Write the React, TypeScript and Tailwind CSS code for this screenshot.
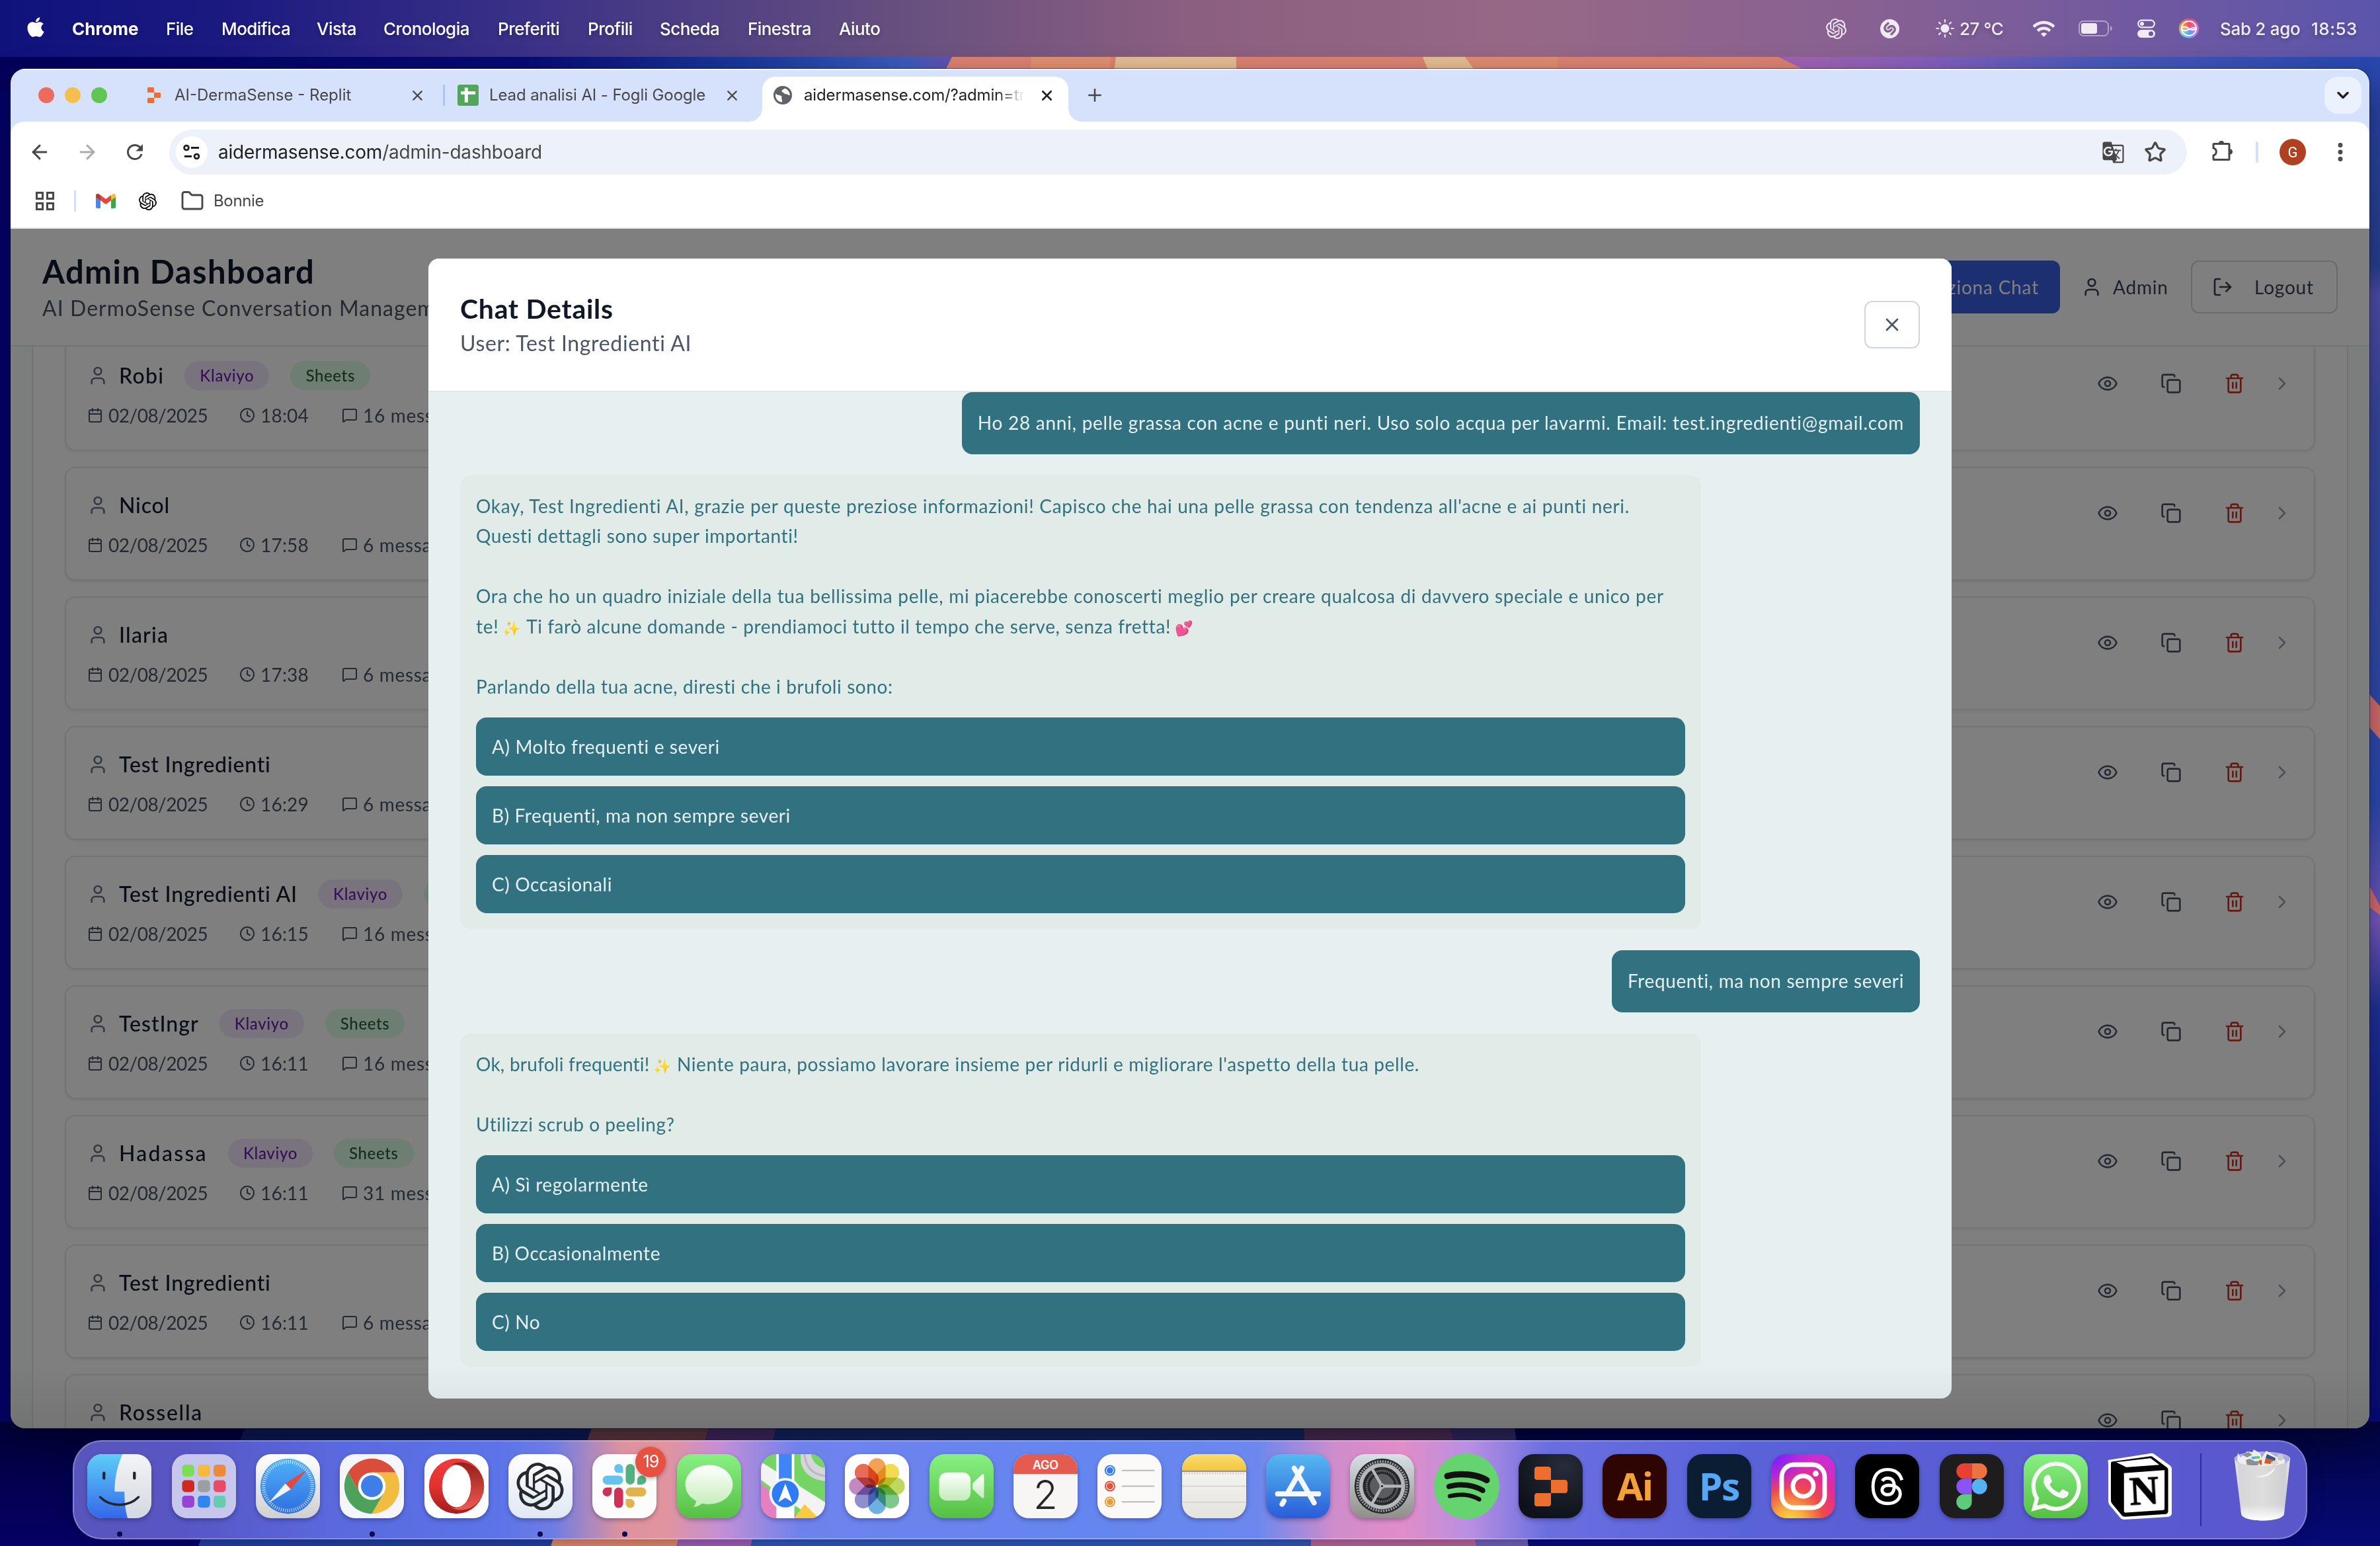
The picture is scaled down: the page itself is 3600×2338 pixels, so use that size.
import type { ReactNode } from "react";
import {
  ArrowLeft,
  ArrowRight,
  Calendar,
  ChevronDown,
  ChevronRight,
  Clock,
  Copy,
  EllipsisVertical,
  Eye,
  Folder,
  LogOut,
  MessageSquare,
  Plus,
  Star,
  Trash2,
  User,
  X,
} from "lucide-react";
import { FaApple, FaSpotify, FaWhatsapp } from "react-icons/fa";
import { FaThreads } from "react-icons/fa6";
import { MdGTranslate, MdRefresh, MdWifi } from "react-icons/md";
import { SiOpenai, SiShazam } from "react-icons/si";

/* ---------- desktop ---------- */

function Wallpaper() {
  return (
    <svg className="absolute inset-0 h-full w-full" viewBox="0 0 3600 2338" preserveAspectRatio="none">
      <defs>
        <linearGradient id="wTop" x1="0" x2="1" y1="0" y2="0">
          <stop offset="0" stopColor="#04005c" />
          <stop offset="0.22" stopColor="#070b74" />
          <stop offset="0.32" stopColor="#1c3c9e" />
          <stop offset="0.38" stopColor="#3c5cbc" />
          <stop offset="0.41" stopColor="#7450a8" />
          <stop offset="0.76" stopColor="#a064b4" />
          <stop offset="0.81" stopColor="#8560bd" />
          <stop offset="0.88" stopColor="#4a5abb" />
          <stop offset="1" stopColor="#2848b0" />
        </linearGradient>
        <linearGradient id="wSide" x1="0" x2="0" y1="0" y2="1">
          <stop offset="0" stopColor="#2848b0" />
          <stop offset="0.14" stopColor="#28418f" />
          <stop offset="0.16" stopColor="#5050a8" />
          <stop offset="0.24" stopColor="#3a4aa0" />
          <stop offset="0.5" stopColor="#2b4cb4" />
          <stop offset="0.58" stopColor="#7a5ac0" />
          <stop offset="0.64" stopColor="#20329a" />
          <stop offset="0.8" stopColor="#0a1080" />
          <stop offset="1" stopColor="#080c78" />
        </linearGradient>
        <linearGradient id="wShade" x1="0" x2="0" y1="0" y2="1">
          <stop offset="0" stopColor="#000018" stopOpacity="0.6" />
          <stop offset="1" stopColor="#000018" stopOpacity="0.05" />
        </linearGradient>
      </defs>
      <rect width="3600" height="2338" fill="#05006a" />
      <rect width="3600" height="140" fill="url(#wTop)" />
      <path d="M1440 86h1250l60 30H1425z" fill="#dd8272" />
      <path d="M1560 86h120l-2 30h-120z" fill="#e29070" />
      <path d="M1688 86h182v30h-186z" fill="#e4bd92" />
      <path d="M2152 86h64l22 30h-74z" fill="#e4bd92" />
      <path d="M2216 86h140v30h-118z" fill="#e08c72" />
      <rect x="3570" y="86" width="30" height="2252" fill="url(#wSide)" />
      <path d="M3584 1050l16 18v50l-16-18zM3584 1340l16 30v14l-16-12z" fill="#d9706f" />
      <path d="M382 2130H905l-72 208H300z" fill="#2140a0" />
      <path d="M905 2130h175l-56 208H833z" fill="#e0876a" />
      <path d="M1080 2130h100l-44 208H1024z" fill="#9c5eb4" />
      <path d="M1180 2130h790l13 208H1136z" fill="#2f55b4" />
      <path d="M1970 2130h218l46 208H1983z" fill="#b5669c" />
      <path d="M2188 2130h100l24 208h-78z" fill="#7060b8" />
      <path d="M2288 2130h1312v208H2312z" fill="#060a7c" />
      <rect y="2150" width="3600" height="188" fill="url(#wShade)" />
    </svg>
  );
}

const MENUS = [
  { label: "File", width: "w-[84px]" },
  { label: "Modifica", width: "w-[144px]" },
  { label: "Vista", width: "w-[101px]" },
  { label: "Cronologia", width: "w-[173px]" },
  { label: "Preferiti", width: "w-[136px]" },
  { label: "Profili", width: "w-[109px]" },
  { label: "Scheda", width: "w-[133px]" },
  { label: "Finestra", width: "w-[138px]" },
  { label: "Aiuto", width: "w-[80px]" },
];

function SunIcon() {
  return (
    <svg className="h-7 w-7" viewBox="0 0 28 28" fill="currentColor" stroke="currentColor" strokeWidth="2.2" strokeLinecap="round">
      <circle cx="14" cy="14" r="6.5" stroke="none" />
      <path d="M14 1.2v3M14 23.800v3M1.200 14h3M23.800 14h3M5 5l2 2M21 21l2 2M5 23l2-2M21 7l2-2" />
    </svg>
  );
}

function BatteryIcon() {
  return (
    <svg className="h-6 w-[52px]" viewBox="0 0 52 24" fill="none">
      <rect x="1" y="1" width="44" height="22" rx="6.500" stroke="currentColor" strokeOpacity="0.5" strokeWidth="2" />
      <rect x="4" y="4" width="24" height="16" rx="3.500" fill="currentColor" />
      <path d="M48 8.500v7c2-.6 3-2 3-3.500s-1-2.900-3-3.500z" fill="currentColor" fillOpacity="0.5" />
    </svg>
  );
}

function ControlCenterIcon() {
  return (
    <svg className="h-7 w-[27px]" viewBox="0 0 27 28" fill="none">
      <rect x="1.200" y="1.700" width="24.600" height="10.600" rx="5.300" stroke="currentColor" strokeWidth="2.200" />
      <circle cx="7" cy="7" r="3" fill="currentColor" />
      <rect y="16" width="27" height="12" rx="6" fill="currentColor" />
      <circle cx="20.500" cy="22" r="3.500" fill="#6c58a0" />
    </svg>
  );
}

function SiriIcon() {
  return (
    <span className="flex h-[30px] w-[30px] items-center justify-center rounded-full bg-[conic-gradient(#ef4a6a,#e06ad0_25%,#a77cf0_35%,#4fb0f5_52%,#8fd0d0_65%,#f0a040_80%,#ef4a6a)]">
      <svg className="h-[26px] w-[26px]" viewBox="0 0 26 26" fill="none" stroke="#fff" strokeWidth="1.800">
        <circle cx="13" cy="13" r="11" />
        <path d="M2 12c6-3 9 0 12 2s6 2 10-1M2 14c8 7 11-4 22-2" />
      </svg>
    </span>
  );
}

function MenuBar() {
  return (
    <header className="relative flex h-[86px] items-center bg-[linear-gradient(90deg,#10127c_0%,#1a1980_9%,#3a3187_22%,#67507f_38%,#8b5f80_50%,#976886_64%,#886192_78%,#7059a0_90%,#5a55ac_100%)] font-['Inter'] text-[26px] font-medium text-white text-shadow-[0_3px_6px_rgba(0,0,0,0.25)]">
      <div className="flex w-[109px] items-center pl-[38px]">
        <FaApple className="h-[34px] w-[32px] -translate-y-[2px]" />
      </div>
      <span className="w-[142px] font-bold">Chrome</span>
      <nav className="flex tracking-[-0.55px]">
        {MENUS.map((m) => (
          <span key={m.label} className={m.width}>
            {m.label}
          </span>
        ))}
      </nav>
      <div className="ml-auto flex items-center pr-[34px] text-[#f0eaf3]">
        <SiOpenai className="h-[31px] w-[31px]" />
        <SiShazam className="ml-[51px] h-[29px] w-[29px]" />
        <span className="ml-[55px] flex items-center gap-2">
          <SunIcon />
          <span className="w-[68px] whitespace-nowrap tracking-[-0.4px]">27 °C</span>
        </span>
        <MdWifi className="ml-[41px] h-[37px] w-[37px]" />
        <span className="ml-[34px]">
          <BatteryIcon />
        </span>
        <span className="ml-[37px]">
          <ControlCenterIcon />
        </span>
        <span className="ml-[36px]">
          <SiriIcon />
        </span>
        <span className="ml-[32px] w-[138px] tracking-[-0.3px]">Sab 2 ago</span>
        <span className="w-[70px] tracking-[0.5px]">18:53</span>
      </div>
    </header>
  );
}

/* ---------- browser chrome ---------- */

function ReplitMark({ className }: { className: string }) {
  return (
    <svg className={className} viewBox="0 0 20 24" fill="#ee6f2d">
      <path d="M1.500 0h7c.8 0 1.500.7 1.500 1.500V8H1.500C.7 8 0 7.300 0 6.500v-5C0 .7.700 0 1.500 0z" />
      <path d="M10 8h8.500c.8 0 1.500.7 1.500 1.500v5c0 .8-.7 1.500-1.500 1.500H10z" />
      <path d="M1.500 16H10v6.500c0 .8-.7 1.500-1.500 1.500h-7C.7 24 0 23.300 0 22.500v-5c0-.8.700-1.500 1.500-1.500z" />
    </svg>
  );
}

function SheetsMark() {
  return (
    <svg className="h-8 w-8" viewBox="0 0 32 32">
      <rect width="32" height="32" rx="3.500" fill="#54a55c" />
      <path d="M10.800 4.500h5v5.800H27v4.400H15.800V27h-5V14.700H5v-4.400h5.800z" fill="#fff" />
    </svg>
  );
}

function GlobeMark() {
  return (
    <svg className="h-7 w-7" viewBox="0 0 28 28">
      <circle cx="14" cy="14" r="14" fill="#5f6368" />
      <path d="M3.500 11.500c2 3 5.500 2 8 3.500 2 1.300 0 3.500 1 5 .8 1.200 1 3 .3 4.600C7 24 3 19.500 3 14zM17 3.500c-1 2-4 1.500-4.500 4-.3 2 2.500 2 3.500 3.500 1.500 2.200 4 .2 5.500 2 1 1.200 2 1 3.300.8C24.500 9 21.500 5 17 3.500z" fill="#fff" />
    </svg>
  );
}

function TabStrip() {
  return (
    <div className="flex h-20 items-center bg-[#d6e1fb] font-['Inter'] text-2xl text-[#474747] shadow-[inset_0_2px_0_#f3f6fe]">
      <div className="flex w-[207px] gap-4 pl-[42px]">
        <i className="h-6 w-6 rounded-full bg-[#ec6a5e]" />
        <i className="h-6 w-6 rounded-full bg-[#f4bf4f]" />
        <i className="h-6 w-6 rounded-full bg-[#61c554]" />
      </div>
      <div className="flex w-[447px] items-center">
        <ReplitMark className="h-6 w-5" />
        <span className="ml-[21px] flex-1">AI-DermaSense - Replit</span>
        <X className="mr-[26px] h-[25px] w-[25px]" strokeWidth={2.300} />
      </div>
      <div className="flex w-[467px] items-center border-l-[3px] border-[#a9c5f8]">
        <span className="ml-[19px]">
          <SheetsMark />
        </span>
        <span className="ml-4 flex-1 whitespace-nowrap tracking-[-0.1px]">Lead analisi AI - Fogli Google</span>
        <X className="mr-[17px] h-[25px] w-[25px]" strokeWidth={2.300} />
      </div>
      <div className="relative mt-3 ml-[16px] flex h-[68px] w-[463px] items-center rounded-t-[20px] bg-white pb-3 text-[#1f1f1f]">
        <i className="absolute bottom-0 -left-5 h-5 w-5 bg-[radial-gradient(circle_at_0_0,transparent_19.5px,#fff_20px)]" />
        <i className="absolute -right-5 bottom-0 h-5 w-5 bg-[radial-gradient(circle_at_100%_0,transparent_19.5px,#fff_20px)]" />
        <span className="ml-[17px]">
          <GlobeMark />
        </span>
        <span className="ml-[18px] w-[334px] overflow-hidden bg-[linear-gradient(90deg,#1f1f1f_87%,transparent_100%)] bg-clip-text tracking-[-0.15px] whitespace-nowrap text-transparent">
          aidermasense.com/?admin=tr
        </span>
        <X className="ml-[21px] h-[25px] w-[25px]" strokeWidth={2.500} />
      </div>
      <Plus className="ml-[25px] h-[30px] w-[30px]" strokeWidth={2} />
      <div className="mr-3 ml-auto flex h-14 w-14 items-center justify-center rounded-[20px] bg-[#ebf2fd] text-[#1f1f1f]">
        <ChevronDown className="h-7 w-7" strokeWidth={3} />
      </div>
    </div>
  );
}

function SiteControlsIcon() {
  return (
    <svg className="h-6 w-7" viewBox="0 0 28 24" fill="none" stroke="#1f1f1f" strokeWidth="2.800">
      <circle cx="6" cy="5.500" r="3.400" />
      <path d="M13 5.500h12M3 18.500h11" />
      <circle cx="21.500" cy="18.500" r="3.400" />
    </svg>
  );
}

function ExtensionsIcon() {
  return (
    <svg className="h-8 w-8" viewBox="0 0 32 32">
      <path d="M3 5.500h22a1 1 0 011 1v22a1 1 0 01-1 1H3a1 1 0 01-1-1v-5.500c2.600-.6 4.300-2.600 4.300-5.500S4.600 12.600 2 12V6.500a1 1 0 011-1z" fill="none" stroke="#474747" strokeWidth="3" strokeLinejoin="round" />
      <path d="M10 5a4 4 0 018 0zM27 13.500a4 4 0 010 8z" fill="#474747" />
    </svg>
  );
}

function Toolbar() {
  return (
    <div className="bg-[#d6e1fb]">
      <div className="flex h-[92px] items-center rounded-t-[20px] bg-white font-['Inter'] text-[28px] text-[#474747]">
        <ArrowLeft className="ml-[27px] h-[34px] w-[34px]" strokeWidth={2.100} />
        <ArrowRight className="ml-[38px] h-[34px] w-[34px] text-[#aaabac]" strokeWidth={2.100} />
        <MdRefresh className="ml-[37px] h-[36px] w-[36px]" />
        <div className="ml-[34px] flex h-[68px] w-[3052px] items-center rounded-full bg-[#edf2fa] pl-[10px]">
          <span className="flex h-12 w-12 items-center justify-center rounded-full bg-white">
            <SiteControlsIcon />
          </span>
          <span className="ml-4 tracking-[-0.2px]">
            <span className="text-[#1f1f1f]">aidermasense.com</span>/admin-dashboard
          </span>
          <MdGTranslate className="ml-auto h-[35px] w-[35px]" />
          <Star className="mr-[31px] ml-[29px] h-[34px] w-[34px]" strokeWidth={2.300} />
        </div>
        <span className="ml-[38px] -mt-1">
          <ExtensionsIcon />
        </span>
        <i className="ml-[34px] h-8 w-1 rounded bg-[#d3e0fb]" />
        <span className="ml-[32px] flex h-10 w-10 items-center justify-center rounded-full bg-[#b0401f] font-['Roboto'] text-[22px] text-white">
          G
        </span>
        <EllipsisVertical className="ml-[34px] h-9 w-9" strokeWidth={2.600} />
      </div>
    </div>
  );
}

function BookmarksBar() {
  return (
    <div className="flex h-[70px] items-center border-b-2 border-[#e2e2e2] bg-white pb-[12px] font-['Inter'] text-2xl text-[#474747]">
      <svg className="ml-[38px] h-7 w-7" viewBox="0 0 28 28" fill="none" stroke="#474747" strokeWidth="3">
        <path d="M1.500 1.500h9v9h-9zM17.500 1.500h9v9h-9zM1.500 17.500h9v9h-9zM17.500 17.500h9v9h-9z" />
      </svg>
      <i className="ml-[30px] h-8 w-[3px] bg-[#d3e0fb]" />
      <svg className="ml-[30px] h-[22px] w-[30px]" viewBox="0 0 30 22">
        <path d="M0 3v17a2 2 0 002 2h5V9z" fill="#4a86ef" />
        <path d="M30 3v17a2 2 0 01-2 2h-5V9z" fill="#43a24f" />
        <path d="M23 3.300V10l7-5V3c0-3-3-3.800-5-2.300z" fill="#f6bd3b" />
        <path d="M7 10V2l8 6 8-6v8l-8 6z" fill="#e2483b" />
        <path d="M0 3v2l7 5V2.300L5 .7C3-.8 0 0 0 3z" fill="#c03526" />
      </svg>
      <SiOpenai className="ml-[35px] h-[27px] w-[27px] text-black" />
      <Folder className="ml-[36px] h-[36px] w-[36px]" strokeWidth={1.900} />
      <span className="ml-[14px] tracking-[-0.35px]">Bonnie</span>
    </div>
  );
}

/* ---------- admin page ---------- */

type Row = { name: string; spacing?: string; time?: string; count?: number; synced?: boolean };

const ROWS: Row[] = [
  { name: "Robi", spacing: "tracking-[1.3px]", time: "18:04", count: 16, synced: true },
  { name: "Nicol", time: "17:58", count: 6 },
  { name: "Ilaria", spacing: "tracking-[1.2px]", time: "17:38", count: 6 },
  { name: "Test Ingredienti", time: "16:29", count: 6 },
  { name: "Test Ingredienti AI", time: "16:15", count: 16, synced: true },
  { name: "TestIngr", spacing: "tracking-[1px]", time: "16:11", count: 16, synced: true },
  { name: "Hadassa", spacing: "tracking-[2.3px]", time: "16:11", count: 31, synced: true },
  { name: "Test Ingredienti", time: "16:11", count: 6 },
  { name: "Rossella", spacing: "tracking-[1.7px]" },
];

function IconButton({ children }: { children: ReactNode }) {
  return <button className="flex h-[72px] w-20 items-center justify-center">{children}</button>;
}

function ConversationCard({ row }: { row: Row }) {
  return (
    <article className="flex h-[172px] shrink-0 items-start justify-between rounded-2xl border-2 border-gray-200 bg-white p-8 shadow-[0_2px_4px_rgba(0,0,0,0.08)]">
      <div>
        <div className="flex h-12 items-center">
          <User className="h-8 w-8 text-gray-500" />
          <span className={`ml-4 text-[32px] font-medium text-gray-900 ${row.spacing ?? "tracking-[0.8px]"}`}>{row.name}</span>
          {row.synced && (
            <>
              <span className="ml-[31px] flex h-11 items-center rounded-full bg-[#f0e6fb] px-[23px] text-2xl font-medium tracking-[0.65px] text-[#6b21a8]">
                Klaviyo
              </span>
              <span className="ml-8 flex h-11 items-center rounded-full bg-[#dcfce7] px-[23px] text-2xl font-medium tracking-[0.65px] text-[#265d35]">
                Sheets
              </span>
            </>
          )}
        </div>
        {row.time && (
          <div className="mt-4 flex h-10 items-center text-[28px] text-gray-600">
            <span className="flex w-[230px] items-center gap-2 tracking-[-0.5px]">
              <Calendar className="h-6 w-6" />
              02/08/2025
            </span>
            <span className="flex w-[155px] items-center gap-2 tracking-[0.2px]">
              <Clock className="h-6 w-6" />
              {row.time}
            </span>
            <span className="flex items-center gap-2 tracking-[0.69px]">
              <MessageSquare className="h-6 w-6" />
              {row.count} messaggi
            </span>
          </div>
        )}
      </div>
      <div className="flex items-center gap-4 text-gray-600">
        <IconButton>
          <Eye className="h-8 w-8" />
        </IconButton>
        <IconButton>
          <Copy className="h-8 w-8" />
        </IconButton>
        <IconButton>
          <Trash2 className="h-8 w-8 text-[#cc3322]" />
        </IconButton>
        <ChevronRight className="h-8 w-8 text-gray-400" />
      </div>
    </article>
  );
}

function AdminPage() {
  return (
    <div className="flex h-full flex-col bg-[#f6fcf9]">
      <div className="flex h-[178px] shrink-0 items-center justify-between border-b-2 border-gray-200 bg-white px-12">
        <div>
          <h1 className="text-[49px] leading-[64px] font-bold tracking-[1.4px] text-gray-900">Admin Dashboard</h1>
          <p className="text-[32px] leading-[48px] tracking-[1.05px] text-gray-600">AI DermoSense Conversation Management</p>
        </div>
        <div className="flex items-center gap-8 text-[28px] tracking-[0.8px] text-gray-700">
          <button className="h-20 rounded-xl bg-[#385ee2] px-8 text-white">Seleziona Chat</button>
          <span className="flex items-center gap-4">
            <User className="h-8 w-8" />
            <span className="w-[86px]">Admin</span>
          </span>
          <button className="flex h-20 w-[222px] items-center gap-8 rounded-xl border-2 border-gray-300 px-[30px]">
            <LogOut className="h-8 w-8" />
            Logout
          </button>
        </div>
      </div>
      <div className="min-h-0 flex-1 overflow-hidden px-8">
        <div className="-mt-3.5 flex flex-col gap-6 border-x-2 border-gray-200 bg-white px-12 pb-6">
          {ROWS.map((row, i) => (
            <ConversationCard key={i} row={row} />
          ))}
        </div>
      </div>
    </div>
  );
}

/* ---------- chat dialog ---------- */

function Emoji({ children }: { children: string }) {
  return <span className="-ml-[2px] inline-block w-[28px] text-[22px] leading-none tracking-normal">{children}</span>;
}

function UserBubble({ children }: { children: ReactNode }) {
  return (
    <p className="self-end rounded-2xl bg-[#327280] px-6 py-6 leading-[45.5px] text-[#e7f0f1]">{children}</p>
  );
}

function BotBubble({ children, options }: { children: ReactNode; options: string[] }) {
  return (
    <section className="w-[85%] rounded-2xl bg-[#e1ebe7] p-6 text-[#327280]">
      <div className="leading-[45.5px] whitespace-nowrap">{children}</div>
      <div className="mt-6 flex flex-col gap-4">
        {options.map((o) => (
          <div key={o} className="flex h-[88px] items-center rounded-2xl bg-[#327280] px-6 tracking-[0.6px] text-[#e7f0f1]">
            {o}
          </div>
        ))}
      </div>
    </section>
  );
}

function ChatDialog() {
  return (
    <div role="dialog" className="flex h-[1724px] w-[2304px] flex-col overflow-hidden rounded-2xl bg-[#e7f0f1]">
      <div className="flex h-[202px] shrink-0 items-center justify-between border-b-2 border-[#e3e7ea] bg-white px-12">
        <div>
          <h2 className="text-[41px] leading-[56px] font-bold tracking-[0.7px] text-gray-900">Chat Details</h2>
          <p className="text-[32px] leading-[48px] tracking-[0.65px] text-gray-600">User: Test Ingredienti AI</p>
        </div>
        <button className="flex h-[72px] w-[84px] items-center justify-center rounded-xl border-2 border-gray-300 text-gray-600">
          <X className="h-8 w-8" />
        </button>
      </div>
      <div className="flex flex-col gap-8 px-12 text-[28px] tracking-[0.7px]">
        <UserBubble>
          <span className="tracking-[0.73px]">
            Ho 28 anni, pelle grassa con acne e punti neri. Uso solo acqua per lavarmi. Email: test.ingredienti@gmail.com
          </span>
        </UserBubble>
        <BotBubble options={["A) Molto frequenti e severi", "B) Frequenti, ma non sempre severi", "C) Occasionali"]}>
          <p>
            Okay, Test Ingredienti AI, grazie per queste preziose informazioni! Capisco che hai una pelle grassa con tendenza all'acne e ai
            punti neri.
            <br />
            <span className="tracking-[0.6px]">Questi dettagli sono super importanti!</span>
          </p>
          <p className="mt-[45.5px]">
            Ora che ho un quadro iniziale della tua bellissima pelle, mi piacerebbe conoscerti meglio per creare qualcosa di davvero
            speciale e unico per
            <br />
            te! <Emoji>✨</Emoji> <span className="tracking-[0.6px]">Ti farò alcune domande - prendiamoci tutto il tempo che serve, senza fretta!</span>{" "}
            <Emoji>💕</Emoji>
          </p>
          <p className="mt-[45.5px] tracking-[0.6px]">Parlando della tua acne, diresti che i brufoli sono:</p>
        </BotBubble>
        <UserBubble>
          <span className="tracking-[0.62px]">Frequenti, ma non sempre severi</span>
        </UserBubble>
        <BotBubble options={["A) Sì regolarmente", "B) Occasionalmente", "C) No"]}>
          <p>
            <span className="tracking-[0.25px]">Ok, brufoli frequenti! </span>
            <Emoji>✨</Emoji>{" "}
            <span className="tracking-[0.62px]">Niente paura, possiamo lavorare insieme per ridurli e migliorare l'aspetto della tua pelle.</span>
          </p>
          <p className="mt-[45.5px] tracking-[0.5px]">Utilizzi scrub o peeling?</p>
        </BotBubble>
      </div>
    </div>
  );
}

function BrowserWindow() {
  return (
    <div className="absolute top-[104px] left-4 flex h-[2056px] w-[3568px] flex-col overflow-hidden rounded-[22px] shadow-[0_0_0_1px_rgba(0,0,30,0.5),0_20px_50px_rgba(0,0,20,0.45)]">
      <TabStrip />
      <Toolbar />
      <BookmarksBar />
      <main className="relative min-h-0 flex-1 font-['Lato']">
        <AdminPage />
        <div className="absolute inset-0 flex items-center justify-center bg-black/50">
          <ChatDialog />
        </div>
        <i className="absolute inset-x-0 bottom-0 h-24 bg-linear-to-t from-black/8 to-transparent" />
      </main>
    </div>
  );
}

/* ---------- dock ---------- */

const TILE = "flex h-[97px] w-[97px] items-center justify-center overflow-hidden rounded-[23px] shadow-[0_3px_6px_rgba(0,0,40,0.3)]";

function FinderIcon() {
  return (
    <svg viewBox="0 0 100 100" className="h-full w-full">
      <defs>
        <linearGradient id="fiL" x1="0" x2="0" y1="0" y2="1">
          <stop stopColor="#5fcdfa" />
          <stop offset="1" stopColor="#3268ea" />
        </linearGradient>
        <linearGradient id="fiR" x1="0" x2="0" y1="0" y2="1">
          <stop stopColor="#f4f4f5" />
          <stop offset="1" stopColor="#d3d8e2" />
        </linearGradient>
      </defs>
      <rect width="100" height="100" fill="url(#fiR)" />
      <path d="M0 0h55c-8 18-12 36-12.500 57 0 .9.500 1.500 1.500 1.500h14c0 15 1 28 5 41.500H0z" fill="url(#fiL)" />
      <path d="M26 29.500v8M73.500 29.500v8" stroke="#23262c" strokeWidth="4.500" strokeLinecap="round" />
      <path d="M20 67c16 16 44 16 60 0" fill="none" stroke="#23262c" strokeWidth="3.600" strokeLinecap="round" />
    </svg>
  );
}

function LaunchpadIcon() {
  const fills = ["#7be04f", "#f8b93c", "#ec8a38", "#d1291f", "#9a9fa2", "#ec4a62", "#9642d6", "#2f86f2", "#63cdb0"];
  return (
    <svg viewBox="0 0 100 100" className="h-full w-full">
      <rect width="100" height="100" fill="#c7c6ec" />
      {fills.map((f, i) => (
        <rect key={i} x={16 + (i % 3) * 24.500} y={16.500 + Math.floor(i / 3) * 24.200} width="19" height="18.500" rx="5" fill={f} />
      ))}
    </svg>
  );
}

function SafariIcon() {
  return (
    <svg viewBox="0 0 100 100" className="h-full w-full">
      <defs>
        <linearGradient id="saB" x1="0" x2="0" y1="0" y2="1">
          <stop stopColor="#ffffff" />
          <stop offset="1" stopColor="#cfcfcf" />
        </linearGradient>
        <linearGradient id="saC" x1="0" x2="0" y1="0" y2="1">
          <stop stopColor="#50b2f8" />
          <stop offset="1" stopColor="#2e6ee0" />
        </linearGradient>
      </defs>
      <rect width="100" height="100" fill="url(#saB)" />
      <circle cx="50" cy="50" r="43" fill="url(#saC)" />
      <circle cx="50" cy="50" r="38" fill="none" stroke="#fff" strokeOpacity="0.85" strokeWidth="5.500" strokeDasharray="1 2.316" />
      <path d="M80 24L54.500 55 46 46z" fill="#e2483b" />
      <path d="M20 76l26-30 8.500 9z" fill="#f2f3f5" />
    </svg>
  );
}

function ChromeIcon() {
  return (
    <svg viewBox="0 0 100 100" className="h-full w-full">
      <rect width="100" height="100" fill="#f5f6fb" />
      <path d="M50 7a43 43 0 0137.200 21.500H50L31.400 60.700 12.800 28.500A43 43 0 0150 7z" fill="#d94d3a" />
      <path d="M87.200 28.500A43 43 0 0150 93l18.600-32.300L50 28.500z" fill="#f2bd3e" />
      <path d="M12.800 28.500A43 43 0 0050 93l18.600-32.300H31.400z" fill="#4da158" />
      <circle cx="50" cy="50" r="21.500" fill="#fff" />
      <circle cx="50" cy="50" r="17" fill="#3f7de8" />
    </svg>
  );
}

function OperaIcon() {
  return (
    <svg viewBox="0 0 100 100" className="h-full w-full">
      <defs>
        <linearGradient id="opA" x1="0" x2="0" y1="0" y2="1">
          <stop stopColor="#ef3a3c" />
          <stop offset="0.500" stopColor="#e2332f" />
          <stop offset="1" stopColor="#a01e1c" />
        </linearGradient>
        <linearGradient id="opB" x1="0" x2="0" y1="0" y2="1">
          <stop stopColor="#93201a" />
          <stop offset="1" stopColor="#ef5a52" />
        </linearGradient>
      </defs>
      <rect width="100" height="100" fill="#fff" />
      <circle cx="50" cy="50" r="43" fill="url(#opA)" />
      <path d="M39 18c22-14 54 2 54 32S61 96 39 82c8 5 22 0 29-10 7-12 7-32 0-44-7-10-21-15-29-10z" fill="url(#opB)" />
      <ellipse cx="50" cy="50" rx="22.500" ry="33" fill="#fff" />
    </svg>
  );
}

function SlackIcon() {
  return (
    <svg viewBox="0 0 100 100" className="h-full w-full">
      <rect width="100" height="100" fill="#fcfcfd" />
      <g fill="#67c3ec">
        <rect x="16" y="33.500" width="32" height="14" rx="7" />
        <path d="M48 29.500h-7a7 7 0 117-7z" />
      </g>
      <g fill="#55b07f">
        <rect x="52" y="15.500" width="14" height="32" rx="7" />
        <path d="M70 47.500v-7a7 7 0 117 7z" />
      </g>
      <g fill="#e1b34c">
        <rect x="52" y="52" width="32" height="14" rx="7" />
        <path d="M52 70h7a7 7 0 11-7 7z" />
      </g>
      <g fill="#cd3157">
        <rect x="34" y="52" width="14" height="32" rx="7" />
        <path d="M30 52v7a7 7 0 11-7-7z" />
      </g>
    </svg>
  );
}

function GreenTile({ children }: { children: ReactNode }) {
  return <span className="flex h-full w-full items-center justify-center bg-linear-to-b from-[#87f083] to-[#56c043]">{children}</span>;
}

function MessagesIcon() {
  return (
    <GreenTile>
      <svg viewBox="0 0 100 100" className="h-full w-full">
        <defs>
          <linearGradient id="msG" x1="0" x2="0" y1="0" y2="1">
            <stop stopColor="#fff" />
            <stop offset="1" stopColor="#c2ecb8" />
          </linearGradient>
        </defs>
        <path d="M50 17c21 0 37 13.500 37 30.500S71 78 50 78c-4 0-7.600-.5-11-1.300C36 80 31 82 25.500 82.500c2.500-2.700 4-5.700 4.300-9.500C19.500 67.500 13 58.500 13 47.500 13 30.500 29 17 50 17z" fill="url(#msG)" />
      </svg>
    </GreenTile>
  );
}

function MapsIcon() {
  return (
    <svg viewBox="0 0 100 100" className="h-full w-full">
      <rect width="100" height="100" fill="#74d564" />
      <path d="M0 45l60 55H0z" fill="#e57fc0" />
      <path d="M0 12v28l80 60h20V75z" fill="#f3f3f5" />
      <path d="M52 100l16-22 22 22z" fill="#f8ca42" />
      <path d="M62 0v10c2 18 16 30 38 32V0z" fill="#d4d6da" />
      <path d="M68 0c2 22 14 32 32 34" fill="none" stroke="#b8bac0" strokeWidth="3" />
      <path d="M78 0h22v22C88 20 80 12 78 0z" fill="#74d564" />
      <path d="M24 0h28v100H24z" fill="#fff" />
      <path d="M28 0h20v60H28z" fill="#3f86f4" />
      <circle cx="38" cy="62" r="25" fill="#f2f4f8" />
      <circle cx="38" cy="62" r="21" fill="#2f7bf5" />
      <path d="M38 46l11 29-11-7-11 7z" fill="#fff" />
    </svg>
  );
}

function PhotosIcon() {
  const petals = ["#f0953a", "#efd63b", "#b6d44a", "#6bc07c", "#5aa6dd", "#7f80c9", "#b878b8", "#e4573f"];
  return (
    <svg viewBox="0 0 100 100" className="h-full w-full bg-white">
      {petals.map((f, i) => (
        <rect key={f} x="36.500" y="6.500" width="27" height="42" rx="13.500" fill={f} fillOpacity="0.88" transform={`rotate(${i * 45} 50 50)`} className="mix-blend-multiply" />
      ))}
    </svg>
  );
}

function FaceTimeIcon() {
  return (
    <GreenTile>
      <svg viewBox="0 0 100 100" className="h-full w-full">
        <defs>
          <linearGradient id="ftG" x1="0" x2="0" y1="0" y2="1">
            <stop stopColor="#fff" />
            <stop offset="1" stopColor="#c4ecba" />
          </linearGradient>
        </defs>
        <rect x="15" y="28.500" width="49" height="44" rx="12" fill="url(#ftG)" />
        <path d="M67 46l14.500-14c1.500-1.500 3.500-.8 3.500 1.500v33c0 2.300-2 3-3.500 1.500L67 54z" fill="url(#ftG)" />
      </svg>
    </GreenTile>
  );
}

function CalendarIcon() {
  return (
    <span className="flex h-full w-full flex-col items-center bg-[#f7f6f5] font-['Inter']">
      <span className="flex h-[30px] w-full items-center justify-center bg-[#e45c50] pt-[3px] text-[18px] font-semibold tracking-[-0.2px] text-white">AGO</span>
      <span className="text-[60px] leading-[62px] font-light text-[#262626]">2</span>
    </span>
  );
}

function RemindersIcon() {
  return (
    <svg viewBox="0 0 100 100" className="h-full w-full bg-[#fbfaf8]">
      {["#2f7bf5", "#e9503c", "#eb9a3a"].map((f, i) => (
        <g key={f}>
          <circle cx="19.500" cy={25.500 + i * 24.500} r="7.300" fill="none" stroke={f} strokeWidth="2" />
          <circle cx="19.500" cy={25.500 + i * 24.500} r="5" fill={f} />
          <path d={`M38 ${25.500 + i * 24.500}h51`} stroke="#b9babd" strokeWidth="2.200" />
        </g>
      ))}
    </svg>
  );
}

function NotesIcon() {
  return (
    <svg viewBox="0 0 100 100" className="h-full w-full">
      <defs>
        <linearGradient id="noY" x1="0" x2="0" y1="0" y2="1">
          <stop stopColor="#f9de72" />
          <stop offset="1" stopColor="#f4c63c" />
        </linearGradient>
        <linearGradient id="noW" x1="0" x2="0" y1="0" y2="1">
          <stop stopColor="#f8f8f7" />
          <stop offset="1" stopColor="#e4e3de" />
        </linearGradient>
      </defs>
      <rect width="100" height="100" fill="url(#noW)" />
      <rect width="100" height="25.500" fill="url(#noY)" />
      <rect y="25.500" width="100" height="2.500" fill="#9a948c" />
      <path d="M3 30.500h94" stroke="#b9b9b9" strokeWidth="2" strokeDasharray="1.300 2.700" />
      <path d="M0 50h100M0 75h100" stroke="#cfcfd2" strokeWidth="1.600" />
    </svg>
  );
}

function AppStoreIcon() {
  return (
    <svg viewBox="0 0 100 100" className="h-full w-full">
      <defs>
        <linearGradient id="asG" x1="0" x2="0" y1="0" y2="1">
          <stop stopColor="#55b9f2" />
          <stop offset="1" stopColor="#2b5cd8" />
        </linearGradient>
      </defs>
      <rect width="100" height="100" fill="url(#asG)" />
      <g stroke="#f4f8ff" strokeWidth="8" strokeLinecap="round" fill="none">
        <path d="M56 22L34 60M44 22l31 54M18 62h64M28 73l-3 5" />
      </g>
    </svg>
  );
}

function SettingsIcon() {
  return (
    <svg viewBox="0 0 100 100" className="h-full w-full">
      <defs>
        <linearGradient id="seG" x1="0" x2="0" y1="0" y2="1">
          <stop stopColor="#d8e0e6" />
          <stop offset="1" stopColor="#8f8e8a" />
        </linearGradient>
      </defs>
      <rect width="100" height="100" fill="url(#seG)" />
      <circle cx="50" cy="50" r="43" fill="#26282b" />
      <circle cx="50" cy="50" r="38.500" fill="none" stroke="#9a9ea1" strokeWidth="4" strokeDasharray="2.300 1.730" />
      <circle cx="50" cy="50" r="33" fill="none" stroke="#b4b8bb" strokeWidth="6" />
      <circle cx="50" cy="50" r="24" fill="none" stroke="#6c6f72" strokeWidth="3" strokeDasharray="1.800 1.340" />
      <circle cx="50" cy="50" r="19" fill="#5a5c5e" />
      <path d="M50 50h31M50 50L34.500 23M50 50L34.500 77" stroke="#b4b8bb" strokeWidth="4.500" />
      <circle cx="50" cy="50" r="4" fill="#b4b8bb" />
      <circle cx="50" cy="50" r="1.800" fill="#2a2c2e" />
    </svg>
  );
}

function InstagramIcon() {
  return (
    <svg viewBox="0 0 100 100" className="h-full w-full">
      <defs>
        <radialGradient id="igA" cx="0.300" cy="1.050" r="1.050">
          <stop stopColor="#f9d74a" />
          <stop offset="0.200" stopColor="#f8b03c" />
          <stop offset="0.500" stopColor="#ee4a4c" />
          <stop offset="0.750" stopColor="#e42d90" />
          <stop offset="1" stopColor="#cc2cd0" />
        </radialGradient>
        <radialGradient id="igB" cx="0.050" cy="0" r="0.600">
          <stop stopColor="#6a22f5" />
          <stop offset="0.500" stopColor="#a023f0" stopOpacity="0.800" />
          <stop offset="1" stopColor="#c02ad8" stopOpacity="0" />
        </radialGradient>
      </defs>
      <rect width="100" height="100" fill="url(#igA)" />
      <rect width="100" height="100" fill="url(#igB)" />
      <g fill="none" stroke="#fff" strokeWidth="7">
        <rect x="16.500" y="16.500" width="67" height="67" rx="19" />
        <circle cx="50" cy="50" r="16" />
      </g>
      <circle cx="69.500" cy="30.500" r="4.600" fill="#fff" />
    </svg>
  );
}

function FigmaIcon() {
  return (
    <svg viewBox="0 0 100 100" className="h-full w-full bg-[#1e1c1c]">
      <path d="M50 14.500H38a12 12 0 000 24h12z" fill="#ea4034" />
      <path d="M50 14.500h12a12 12 0 010 24H50z" fill="#ee7240" />
      <path d="M50 38.500H38a12 12 0 000 24h12z" fill="#8c52f5" />
      <circle cx="62" cy="50.500" r="12" fill="#55b2f4" />
      <path d="M38 62.500h12v12a12 12 0 11-12-12z" fill="#5ecb7c" />
    </svg>
  );
}

function NotionIcon() {
  return (
    <svg viewBox="0 0 100 100" className="h-[99px] w-[99px] shrink-0 overflow-visible">
      <path d="M2 10L66 0c3-.5 5 0 7 1.500l22 16c3 2 4 4 4 7v66c0 4-2 6-6 6.500l-66 4c-3 .2-5-.6-7-3L5 80c-2-2.500-3-4.500-3-7V16c0-3-1-5 0-6z" fill="#fff" />
      <path d="M7 12.500L65 4.500c2-.3 4 .2 5.500 1.300L91 21c2 1.500 2.500 2.500 2.500 5v62c0 3-1.500 4.500-4 4.700l-62 4c-2 0-3.500-.4-5-2.200L8 77c-1.300-2-2-3-2-5V17c0-2 0-3.500 1-4.500z" fill="#000" />
      <path d="M14 13.500l50-6c2-.2 3 0 4 .8L80 17.500 31 21c-2 0-3-.3-4-1.200z" fill="#fff" />
      <path d="M26 30l62-4.500v58c0 2-.6 3-2.500 3.200L29 90.500c-2 .1-3-1-3-3z" fill="#fff" />
      <text x="57" y="78" textAnchor="middle" fontFamily="Liberation Serif" fontWeight="700" fontSize="62" fill="#000" stroke="#000" transform="rotate(-3 57 58)">
        N
      </text>
    </svg>
  );
}

function TrashIcon() {
  return (
    <svg viewBox="0 0 86 112" className="h-[112px] w-[86px]">
      <defs>
        <linearGradient id="trG" x1="0" x2="1" y1="0" y2="0">
          <stop stopColor="#f0f0f4" />
          <stop offset="0.080" stopColor="#d6d6da" />
          <stop offset="0.500" stopColor="#dedddd" />
          <stop offset="0.920" stopColor="#cfcfd4" />
          <stop offset="1" stopColor="#f0f0f4" />
        </linearGradient>
        <linearGradient id="trB" x1="0" x2="0" y1="0" y2="1">
          <stop stopColor="#fff" stopOpacity="0" />
          <stop offset="1" stopColor="#fff" />
        </linearGradient>
      </defs>
      <ellipse cx="43" cy="15" rx="42" ry="10" fill="#a9aae2" stroke="#d5d5f5" strokeWidth="1" />
      <path d="M5 18l1-12 4 7 10-9 8 1 2-4 10 6 2 7 7-11 15 9 8-1 5 6v8l-12 6H16z" fill="#eeeeef" />
      <path d="M12 9l10-4 6 4-8 4zM24 15l8 4 8-1-4 7H20l-2-8z" fill="#8d8f92" />
      <path d="M26 12l12-1-4 4-6 1z" fill="#45b8ec" />
      <path d="M33 12l6-1v4h-6z" fill="#74d13e" />
      <path d="M50 8l13 6-1 5-14-5z" fill="#3a558c" />
      <path d="M48 14l13 3-6 6-9-1zM38 18l4-2v8h-3z" fill="#c8612c" />
      <path d="M66 9c6-3 10 0 9 5s-7 5-9 2z" fill="#c9cacc" />
      <path d="M56 20l8-3 4 5-9 3z" fill="#d8d8da" />
      <path d="M1 16c5 13 79 13 84 0l-9 82c-1 14-64 14-65 0z" fill="url(#trG)" />
      <path d="M9 84h68l-1 14c-1 14-64 14-65 0z" fill="url(#trB)" />
      <path d="M30 42c14 0 24-5 32-14 0 10-16 18-32 14z" fill="#f2f2f3" />
    </svg>
  );
}

type DockApp = { name: string; running?: boolean; badge?: string; bare?: boolean; icon: ReactNode };

const DOCK: DockApp[] = [
  { name: "Finder", running: true, icon: <FinderIcon /> },
  { name: "Launchpad", icon: <LaunchpadIcon /> },
  { name: "Safari", icon: <SafariIcon /> },
  { name: "Chrome", running: true, icon: <ChromeIcon /> },
  { name: "Opera", icon: <OperaIcon /> },
  {
    name: "ChatGPT",
    running: true,
    icon: (
      <span className="flex h-full w-full items-center justify-center bg-linear-to-b from-white to-[#e0e8f3]">
        <SiOpenai className="h-[72px] w-[72px] text-[#25292d]" />
      </span>
    ),
  },
  { name: "Slack", running: true, badge: "19", icon: <SlackIcon /> },
  { name: "Messages", icon: <MessagesIcon /> },
  { name: "Maps", icon: <MapsIcon /> },
  { name: "Photos", icon: <PhotosIcon /> },
  { name: "FaceTime", icon: <FaceTimeIcon /> },
  { name: "Calendar", icon: <CalendarIcon /> },
  { name: "Reminders", icon: <RemindersIcon /> },
  { name: "Notes", icon: <NotesIcon /> },
  { name: "App Store", icon: <AppStoreIcon /> },
  { name: "Settings", icon: <SettingsIcon /> },
  {
    name: "Spotify",
    bare: true,
    icon: (
      <span className="flex h-[99px] w-[99px] shrink-0 items-center justify-center rounded-full bg-[radial-gradient(circle,#111_60%,#65d36e_62%)]">
        <FaSpotify className="h-[100px] w-[100px] shrink-0 text-[#65d36e]" />
      </span>
    ),
  },
  {
    name: "Replit",
    icon: (
      <span className="flex h-full w-full items-center justify-center bg-[radial-gradient(circle_at_70%_20%,#262c3a,#0e1118_80%)]">
        <ReplitMark className="h-[60px] w-[50px]" />
      </span>
    ),
  },
  {
    name: "Illustrator",
    icon: (
      <span className="flex h-full w-full items-center justify-center bg-[#2e0503] font-['Open_Sans'] text-[57px] font-bold tracking-[-1.5px] text-[#f3a13b]">
        Ai
      </span>
    ),
  },
  {
    name: "Photoshop",
    icon: (
      <span className="flex h-full w-full items-center justify-center bg-[#0a1d33] font-['Open_Sans'] text-[57px] font-bold tracking-[-1.5px] text-[#55a8f8]">
        Ps
      </span>
    ),
  },
  { name: "Instagram", icon: <InstagramIcon /> },
  {
    name: "Threads",
    icon: (
      <span className="flex h-full w-full items-center justify-center bg-black">
        <FaThreads className="h-[60px] w-[60px] text-white" />
      </span>
    ),
  },
  { name: "Figma", icon: <FigmaIcon /> },
  {
    name: "WhatsApp",
    icon: (
      <GreenTile>
        <FaWhatsapp className="h-[86px] w-[86px] text-[#f6f7f6]" />
      </GreenTile>
    ),
  },
  { name: "Notion", bare: true, icon: <NotionIcon /> },
];

function Dock() {
  return (
    <div className="absolute top-[2178px] left-[110px] flex h-[150px] w-[3380px] items-start rounded-[44px] border-2 border-white/25 bg-[linear-gradient(90deg,#5855bd_0%,#5856c4_5%,#5a6ade_12%,#5b74e8_19%,#6f7ce4_21.500%,#dc929e_24.500%,#e2949e_26.500%,#c38fd6_29%,#6f82ec_32.500%,#6486ef_46%,#6b88ee_53%,#cf8ccb_56.500%,#e18dc8_59.500%,#b98fe2_62.500%,#6a6fdf_66%,#5963d8_75%,#5a5ad0_90%,#5a57cb_100%)] pl-[5px] shadow-[0_0_24px_rgba(0,0,30,0.250)]">
      {DOCK.map((app) => (
        <div key={app.name} className="relative flex h-[146px] w-[127.350px] shrink-0 flex-col items-center pt-[19px]">
          <div className={app.bare ? "flex h-[97px] w-[97px] items-center justify-center" : TILE}>{app.icon}</div>
          {app.running && <i className="mt-5 h-2 w-2 rounded-full bg-[#0a0a50]" />}
          {app.badge && (
            <span className="absolute top-2 right-[1px] flex h-[46px] w-[46px] items-center justify-center rounded-full bg-[#e8513f] font-['Inter'] text-[25px] tracking-[-1px] text-white shadow-[0_2px_6px_rgba(0,0,0,0.300)]">
              {app.badge}
            </span>
          )}
        </div>
      ))}
      <i className="mt-[18px] ml-[27px] h-[110px] w-[2px] bg-[#2c2c9c]" />
      <div className="mt-[11px] ml-[49px]">
        <TrashIcon />
      </div>
    </div>
  );
}

export default function App() {
  return (
    <div className="relative h-[2338px] w-[3600px] overflow-hidden bg-[#05006a]">
      <Wallpaper />
      <MenuBar />
      <BrowserWindow />
      <Dock />
    </div>
  );
}
